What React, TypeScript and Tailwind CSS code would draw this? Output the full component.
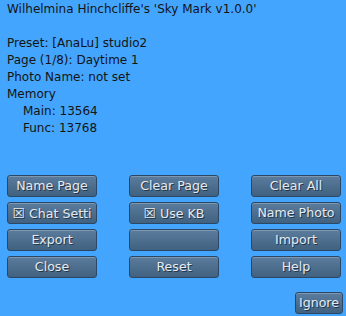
import type { ReactNode } from 'react';

function Btn({ children, className = '' }: { children?: ReactNode; className?: string }) {
  return (
    <button
      className={`h-[22px] rounded-[3px] border border-[#2a4866] bg-gradient-to-b from-[#5b7c9d] to-[#40617f] text-[12.6px] leading-none text-[#e6eaef] shadow-[inset_0_1px_0_rgba(255,255,255,0.22)] [text-shadow:1px_1px_0_#22374d] whitespace-nowrap overflow-hidden ${className}`}
    >
      {children}
    </button>
  );
}

const Box = () => <span className="text-[14px] leading-none">{'\u2612'}</span>;

export default function App() {
  const buttons: ReactNode[] = [
    'Name Page', 'Clear Page', 'Clear All',
    <><Box /> Chat Setti</>, <><Box /> Use KB</>, 'Name Photo',
    'Export', '', 'Import',
    'Close', 'Reset', 'Help',
  ];

  return (
    <div className="w-[346px] h-[316px] bg-[#43a5fd] font-['DejaVu_Sans',sans-serif] text-[12px] leading-[17px] text-[#141414] overflow-hidden">
      <div className="pt-px pl-[7px]">
        <p>Wilhelmina Hinchcliffe's 'Sky Mark v1.0.0'</p>
        <p>&nbsp;</p>
        <p>Preset: [AnaLu] studio2</p>
        <p>Page (1/8): Daytime 1</p>
        <p>Photo Name: not set</p>
        <p>Memory</p>
        <p className="pl-4">Main: 13564</p>
        <p className="pl-4">Func: 13768</p>
      </div>

      <div className="mt-[38px] ml-[7px] grid grid-cols-[90px_90px_90px] gap-x-[32px] gap-y-[5px]">
        {buttons.map((b, i) => (
          <Btn key={i}>{b}</Btn>
        ))}
      </div>

      <div className="flex justify-end pr-[3px] mt-[14px]">
        <Btn className="w-[48px]">Ignore</Btn>
      </div>
    </div>
  );
}
